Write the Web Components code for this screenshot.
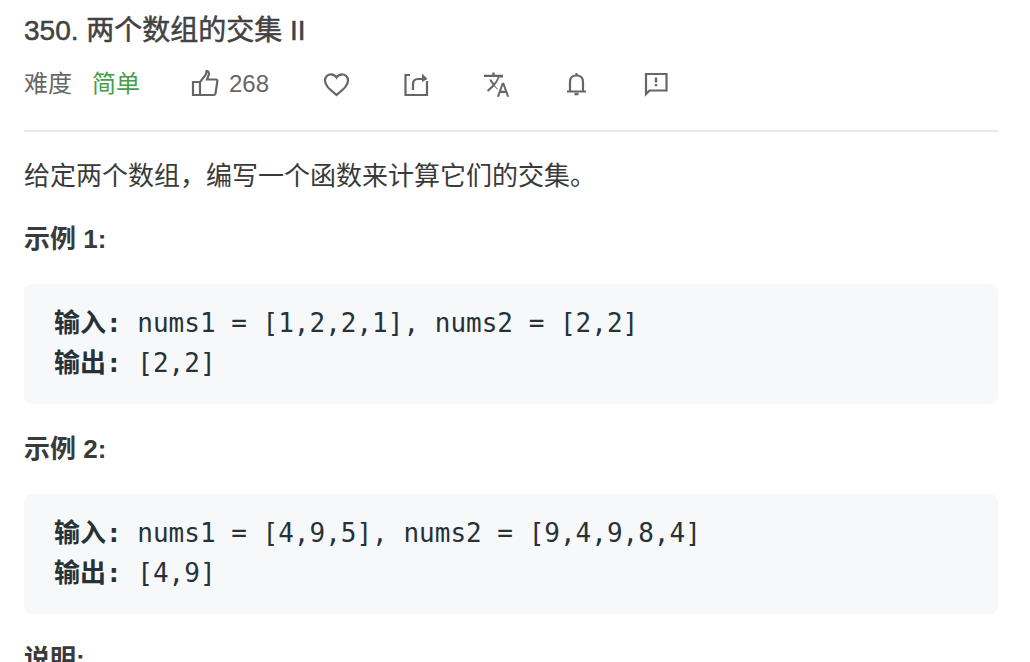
<!DOCTYPE html>
<html lang="zh">
<head>
<meta charset="utf-8">
<title>350. 两个数组的交集 II</title>
<style>
  html, body { margin: 0; height: 100%; overflow: hidden; background: #fff; }
  body { font-family: "Liberation Sans", "Noto Sans CJK SC", sans-serif; }
</style>
</head>
<body>
<question-page>
  <question-header slot="header" title-text="350. 两个数组的交集 II" level="简单" likes="268"></question-header>
  <p>给定两个数组，编写一个函数来计算它们的交集。</p>
  <h-label>示例 1:</h-label>
  <code-block in="nums1 = [1,2,2,1], nums2 = [2,2]" out="[2,2]"></code-block>
  <h-label>示例 2:</h-label>
  <code-block in="nums1 = [4,9,5], nums2 = [9,4,9,8,4]" out="[4,9]"></code-block>
  <h-label>说明:</h-label>
</question-page>

<script>
// all icons drawn on a 28x28 box
const icons = {
  like: `<path d="M2 12H9V25H2zM9 12L14.5 5C15 4 15.5 2.5 15.5 1C17.5 1 18.3 3 17.7 5L16 9.5H25C26 9.5 26.5 10.5 26.3 11.5L24.5 23.5C24.3 24.5 23.5 25 22.5 25H9"/>`,
  heart: `<path d="M14.5 25C8 19.5 3 15.8 3 10.5 3 7 5.7 4.3 9 4.3c2.2 0 4.3 1.2 5.5 3.2 1.2-2 3.3-3.2 5.5-3.2 3.3 0 6 2.7 6 6.2 0 5.3-5 9-11.5 14.5z"/>`,
  share: `<path d="M8 5H3.5V25H25V11"/><path d="M11 20V14C11 11 13 9 16 9H24"/><path d="M20 3.5L25.5 9L20 12z" fill="#666" stroke="none"/>`,
  translate: `<g transform="translate(2 2) scale(1.12)" fill="#666" stroke="none"><path d="M12.3 14.9l-2.8-2.8v-.1c1.900-2.100 3.300-4.600 4.100-7.200H17V2.500H9.500V.5H7.400v2H0v2h12.200c-.7 2-1.800 3.900-3.200 5.500-.9-1-1.700-2.100-2.300-3.300h-2c.7 1.600 1.700 3.200 3 4.600l-5.100 5L4 17.700l5-5 3.100 3.100z"/><path d="M18 9.500h-2L11.500 22h2l1.100-3.200h4.800l1.100 3.200h2zm-2.700 7.300l1.700-4.700 1.700 4.700z"/></g>`,
  bell: `<path d="M5 21.5H24M8 21.5V12C8 8 10.5 5.5 14.5 5.5S21 8 21 12V21.5M14.5 5.5V3"/><path d="M12.5 24h4" stroke-width="2.5"/>`,
  feedback: `<path d="M4 24V4H24.5V20.5H7.5z"/><path d="M14 7.5v5M14 14v2.2" stroke-width="2.4"/>`
};

class QuestionPage extends HTMLElement {
  constructor() {
    super();
    this.attachShadow({ mode: "open" }).innerHTML = `
      <style>
        :host { display: block; padding: 0 32px 0 24px; }
        ::slotted(p) { margin: 24px 0 0; font-size: 26px; line-height: 40px; color: #3a3a3a; }
      </style>
      <slot name="header"></slot>
      <slot></slot>`;
  }
}

class QuestionHeader extends HTMLElement {
  constructor() {
    super();
    this.attachShadow({ mode: "open" });
  }

  connectedCallback() {
    const icon = (name) => `<svg class="i" viewBox="0 0 28 28" aria-hidden="true">${icons[name]}</svg>`;
    this.shadowRoot.innerHTML = `
      <style>
        :host { display: block; box-sizing: border-box; height: 132px; border-bottom: 2px solid #e8e8e8; }
        h1 { margin: 0; padding-top: 13px; font-size: 28px; line-height: 36px; font-weight: 400; color: #424242; -webkit-text-stroke: .5px #424242; }
        .meta { display: flex; align-items: center; height: 40px; margin-top: 15px; font-size: 24px; color: #666; }
        .cjk { margin-bottom: 5px; }
        .easy { color: #43a047; margin-left: 20px; width: 99px; }
        .likes { display: flex; align-items: center; gap: 10px; width: 131px; }
        .btn { width: 80px; display: flex; }
        .i { width: 28px; height: 28px; fill: none; stroke: #666; stroke-width: 2.2; flex: none; }
      </style>
      <h1>${this.getAttribute("title-text")}</h1>
      <div class="meta">
        <span class="cjk">难度</span><span class="cjk easy">${this.getAttribute("level")}</span>
        <span class="likes">${icon("like")}${this.getAttribute("likes")}</span>
        <span class="btn">${icon("heart")}</span>
        <span class="btn">${icon("share")}</span>
        <span class="btn">${icon("translate")}</span>
        <span class="btn">${icon("bell")}</span>
        <span class="btn">${icon("feedback")}</span>
      </div>`;
  }
}

class HLabel extends HTMLElement {
  constructor() {
    super();
    this.attachShadow({ mode: "open" }).innerHTML = `
      <style>
        :host { display: block; font-size: 26px; line-height: 40px; font-weight: 700; color: #3a3a3a; margin-top: 23px; }
      </style>
      <slot></slot>`;
  }
}

class CodeBlock extends HTMLElement {
  constructor() {
    super();
    this.attachShadow({ mode: "open" });
  }

  connectedCallback() {
    this.shadowRoot.innerHTML = `
      <style>
        :host { display: block; height: 120px; box-sizing: border-box; margin: 25px 0; padding: 19px 30px; background: #f7f8fa; border-radius: 8px; }
        div { font-family: "DejaVu Sans Mono", "Noto Sans CJK SC", monospace; font-size: 26px; line-height: 40px; height: 40px; color: #263238; white-space: pre; }
      </style>
      <div><b>输入:</b> ${this.getAttribute("in")}</div>
      <div><b>输出:</b> ${this.getAttribute("out")}</div>`;
  }
}

customElements.define("question-page", QuestionPage);
customElements.define("question-header", QuestionHeader);
customElements.define("h-label", HLabel);
customElements.define("code-block", CodeBlock);
</script>
</body>
</html>
